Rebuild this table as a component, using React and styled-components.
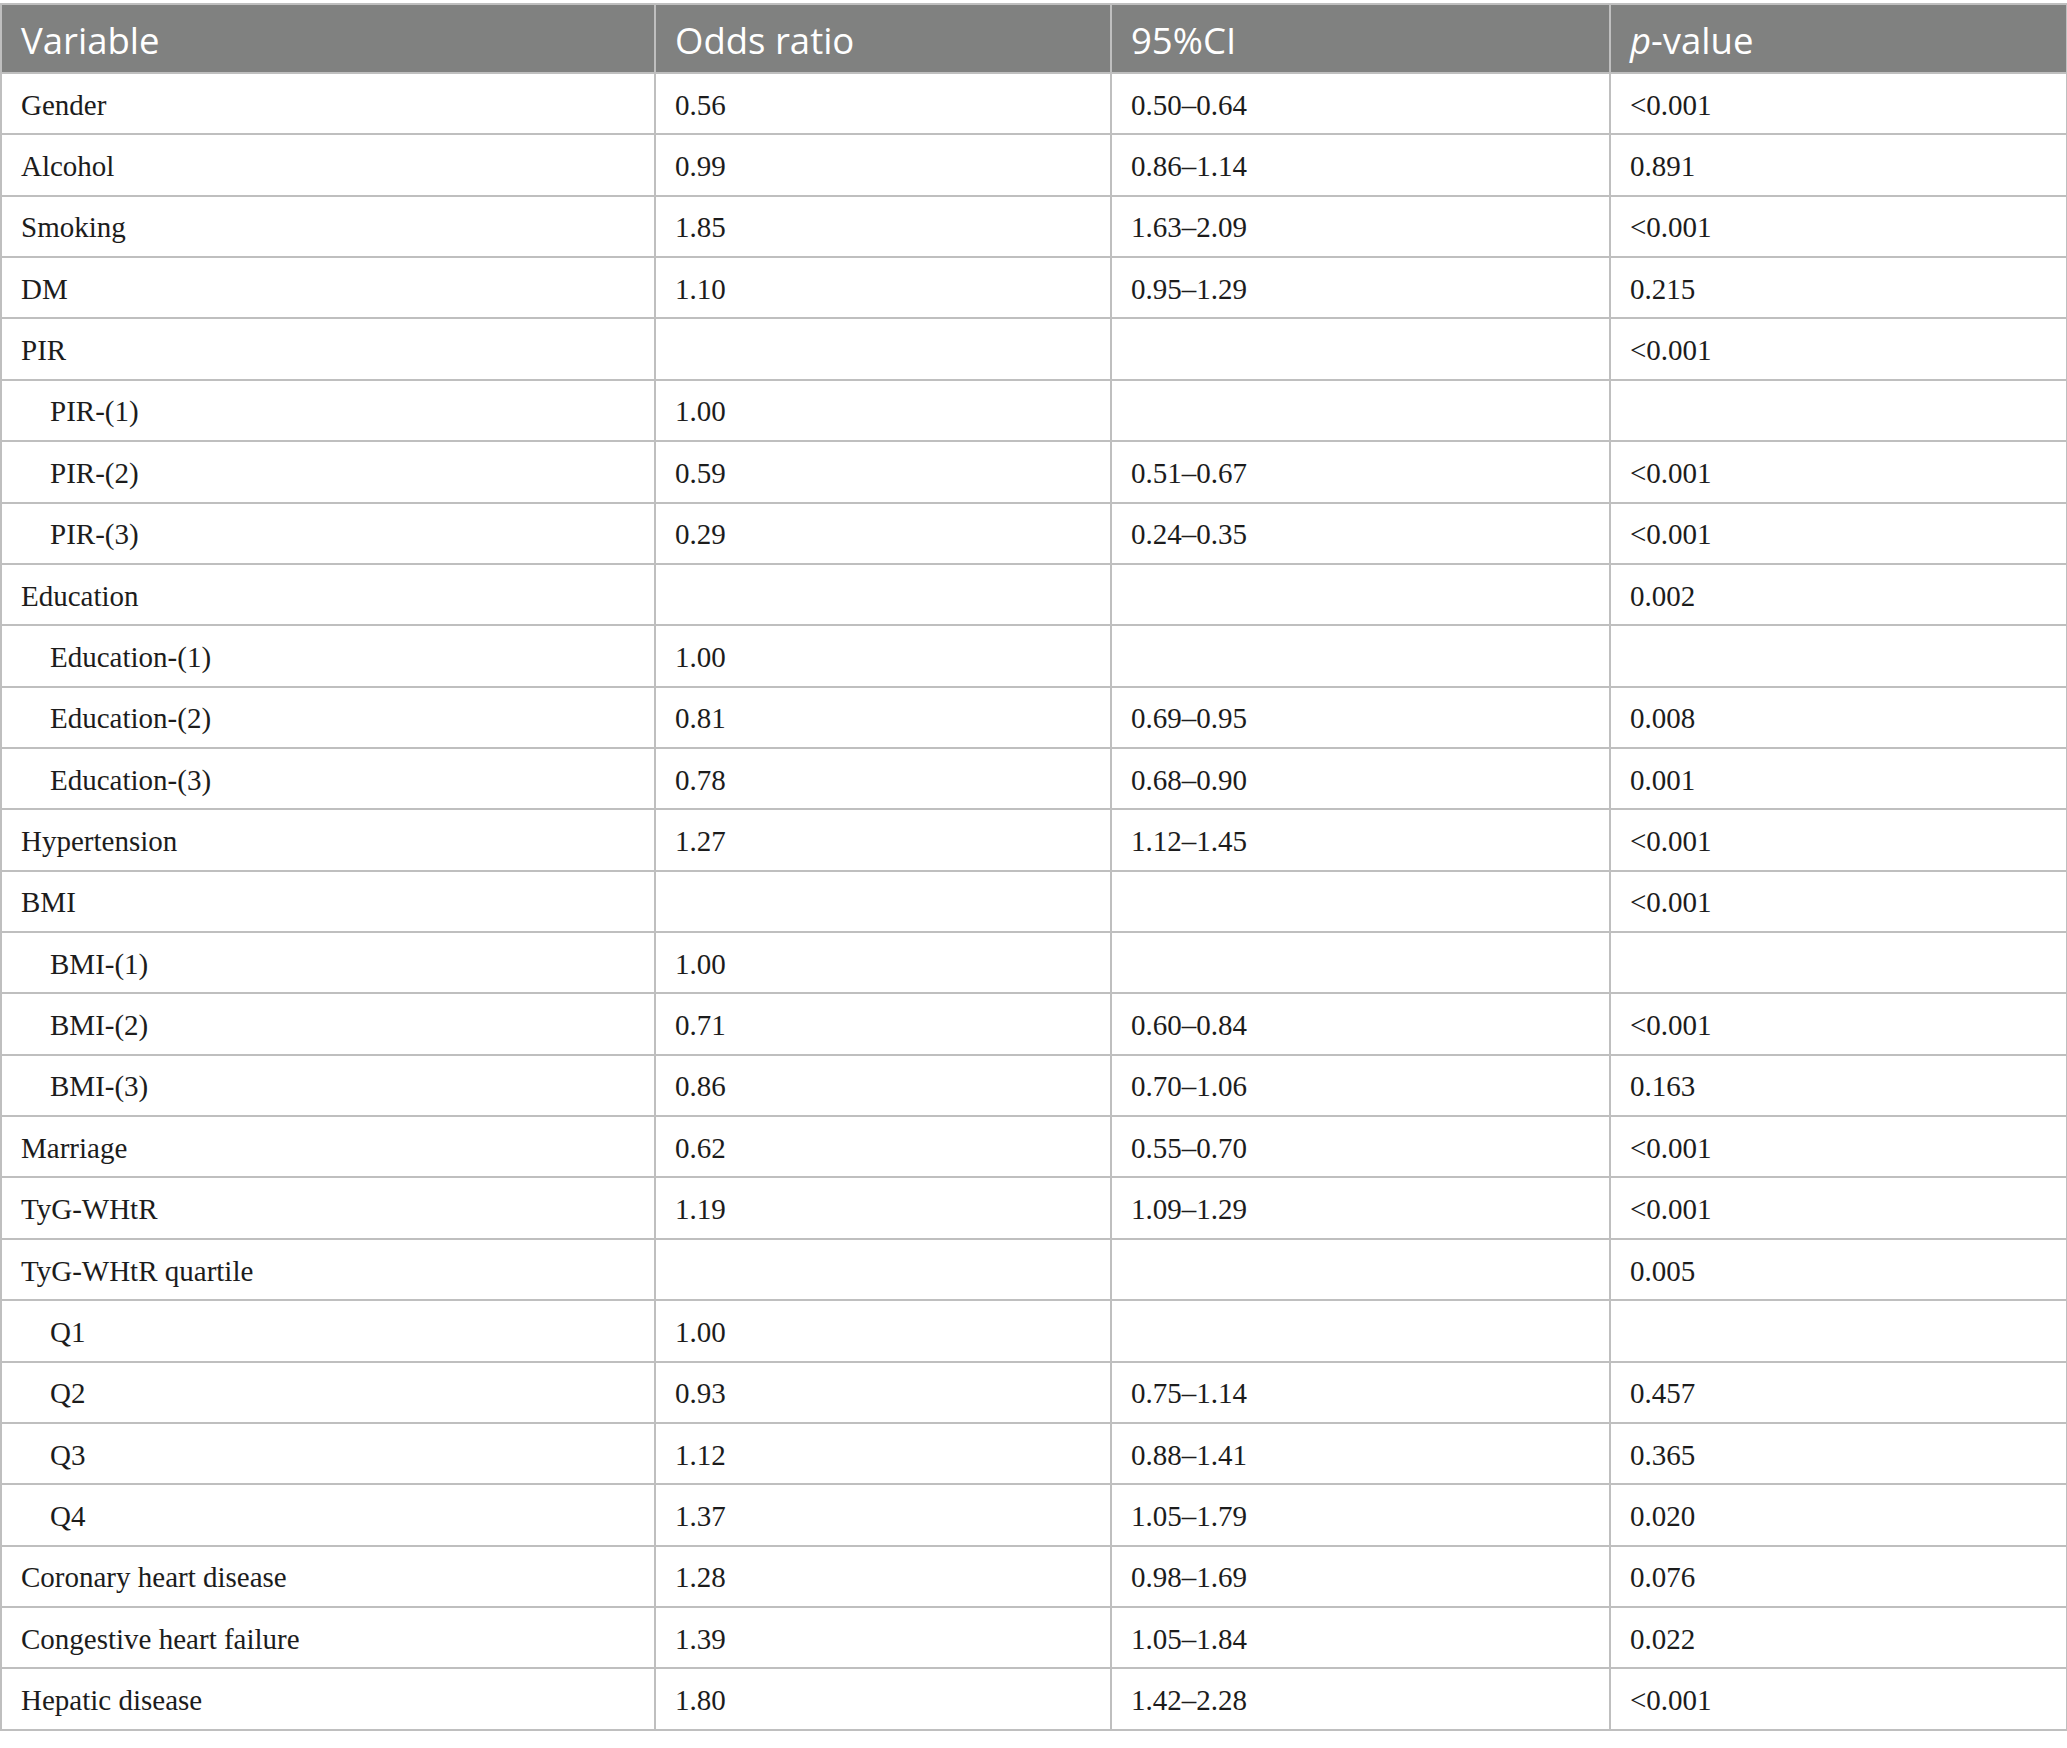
import React from "react";
import styled, { createGlobalStyle } from "styled-components";

const Global = createGlobalStyle`
  html, body { margin: 0; padding: 0; background: #ffffff; }
  body { width: 2067px; }
`;

const Page = styled.div`
  padding-top: 3px;
  width: 2066px;
`;

const Table = styled.table`
  width: 2066px;
  border-collapse: collapse;
  table-layout: fixed;
  border: 2px solid #bfbfbf;
`;

const HeadRow = styled.tr`
  height: 69px;
  background: #808180;
`;

const HeadCell = styled.th`
  border: 2px solid #bfbfbf;
  padding: 2px 0 0 19px;
  text-align: left;
  font-family: "Open Sans", "Noto Sans", sans-serif;
  font-weight: 400;
  font-size: 36.5px;
  color: #ffffff;
  vertical-align: middle;
`;

const Row = styled.tr`
  height: 61.37px;
`;

const Cell = styled.td`
  border: 2px solid #bfbfbf;
  padding: 3px 0 0 ${(p) => (p.$indent ? 48 : 19)}px;
  font-family: "Liberation Serif", "Times New Roman", serif;
  font-size: 29px;
  color: #1c1c1c;
  vertical-align: middle;
  white-space: nowrap;
`;

const rows = [
  ["Gender", "0.56", "0.50–0.64", "<0.001"],
  ["Alcohol", "0.99", "0.86–1.14", "0.891"],
  ["Smoking", "1.85", "1.63–2.09", "<0.001"],
  ["DM", "1.10", "0.95–1.29", "0.215"],
  ["PIR", "", "", "<0.001"],
  ["PIR-(1)", "1.00", "", "", true],
  ["PIR-(2)", "0.59", "0.51–0.67", "<0.001", true],
  ["PIR-(3)", "0.29", "0.24–0.35", "<0.001", true],
  ["Education", "", "", "0.002"],
  ["Education-(1)", "1.00", "", "", true],
  ["Education-(2)", "0.81", "0.69–0.95", "0.008", true],
  ["Education-(3)", "0.78", "0.68–0.90", "0.001", true],
  ["Hypertension", "1.27", "1.12–1.45", "<0.001"],
  ["BMI", "", "", "<0.001"],
  ["BMI-(1)", "1.00", "", "", true],
  ["BMI-(2)", "0.71", "0.60–0.84", "<0.001", true],
  ["BMI-(3)", "0.86", "0.70–1.06", "0.163", true],
  ["Marriage", "0.62", "0.55–0.70", "<0.001"],
  ["TyG-WHtR", "1.19", "1.09–1.29", "<0.001"],
  ["TyG-WHtR quartile", "", "", "0.005"],
  ["Q1", "1.00", "", "", true],
  ["Q2", "0.93", "0.75–1.14", "0.457", true],
  ["Q3", "1.12", "0.88–1.41", "0.365", true],
  ["Q4", "1.37", "1.05–1.79", "0.020", true],
  ["Coronary heart disease", "1.28", "0.98–1.69", "0.076"],
  ["Congestive heart failure", "1.39", "1.05–1.84", "0.022"],
  ["Hepatic disease", "1.80", "1.42–2.28", "<0.001"],
];

export default function App() {
  return (
    <Page>
      <Global />
      <Table>
        <colgroup>
          <col style={{ width: 654 }} />
          <col style={{ width: 456 }} />
          <col style={{ width: 499 }} />
          <col style={{ width: 457 }} />
        </colgroup>
        <thead>
          <HeadRow>
            <HeadCell>Variable</HeadCell>
            <HeadCell>Odds ratio</HeadCell>
            <HeadCell>95%CI</HeadCell>
            <HeadCell>
              <i>p</i>-value
            </HeadCell>
          </HeadRow>
        </thead>
        <tbody>
          {rows.map(([v, or, ci, p, indent], i) => (
            <Row key={i}>
              <Cell $indent={indent}>{v}</Cell>
              <Cell>{or}</Cell>
              <Cell>{ci}</Cell>
              <Cell>{p}</Cell>
            </Row>
          ))}
        </tbody>
      </Table>
    </Page>
  );
}
